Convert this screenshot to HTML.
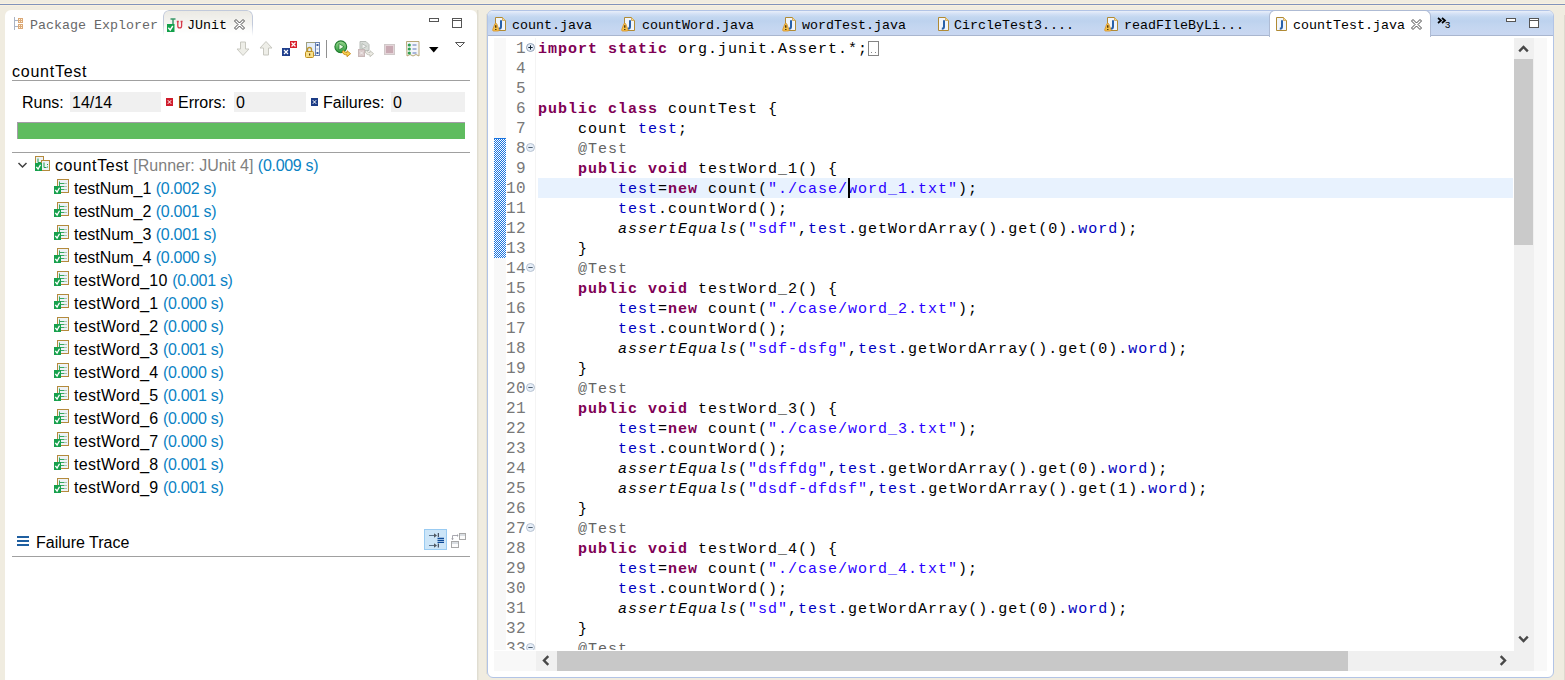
<!DOCTYPE html>
<html><head><meta charset="utf-8"><style>
html,body{margin:0;padding:0}
body{width:1565px;height:680px;background:#f0ece0;position:relative;overflow:hidden;font-family:"Liberation Sans",sans-serif}
.a{position:absolute}
.ui{font-family:"Liberation Sans",sans-serif;font-size:16px;color:#000;white-space:pre;line-height:20px}
.tab{font-family:"Liberation Mono",monospace;font-size:13.33px;white-space:pre;line-height:16px;color:#000}
.code{position:absolute;left:538px;padding-top:2px;font-family:"Liberation Mono",monospace;font-size:15px;letter-spacing:1px;line-height:20px;white-space:pre;color:#000}
.ln{position:absolute;left:501px;padding-top:1px;width:25px;text-align:right;font-family:"Liberation Mono",monospace;font-size:16px;letter-spacing:0.4px;line-height:20px;white-space:pre;color:#787878}
.k{color:#7f0055;font-weight:bold}
.s{color:#2a00ff}
.f{color:#0000c0}
.an{color:#646464}
.i{font-style:italic}
.g{color:#808080}
.b{color:#0a82c4;letter-spacing:-0.3px}
.row{position:absolute;height:23px;line-height:23px}
</style></head><body>
<!-- top stripe -->
<div class="a" style="left:0;top:3px;width:1565px;height:1px;background:#f9f1e0"></div>
<div class="a" style="left:0;top:4px;width:1565px;height:1px;background:#8193bb"></div>
<div class="a" style="left:0;top:5px;width:1565px;height:1px;background:#f9f1e0"></div>

<!-- LEFT PANEL -->
<div class="a" style="left:5px;top:10px;width:472px;height:670px;background:#fff;border-radius:6px 6px 0 0"></div>

<!-- package explorer tab -->
<svg class="a" style="left:13px;top:17px" width="12" height="14" viewBox="0 0 12 14">
 <path d="M1.5 0v13M1.5 3.5h3.5M1.5 9.5h3.5" stroke="#aab4c4" stroke-width="1" fill="none"/>
 <rect x="5" y="1" width="5" height="5" fill="#dba878"/>
 <rect x="5" y="7" width="5" height="5" fill="#dba878"/>
 <path d="M6 2h1v1h-1zM8 2h1v1h-1zM6 4h1v1h-1zM8 4h1v1h-1zM6 8h1v1h-1zM8 8h1v1h-1zM6 10h1v1h-1zM8 10h1v1h-1z" fill="#fff6d8"/>
</svg>
<div class="a tab" style="left:30px;top:18px;color:#686868">Package Explorer</div>
<!-- junit tab -->
<div class="a" style="left:163px;top:10px;width:88px;height:25px;border:1px solid #c2cadb;border-bottom:none;border-radius:6px 6px 0 0;background:linear-gradient(#ebeae4,#ffffff);-webkit-mask-image:linear-gradient(#000 55%,rgba(0,0,0,0))"></div>
<svg class="a" style="left:167px;top:18px" width="18" height="15" viewBox="0 0 18 15">
 <path d="M3.5 1h5M6 1v6.5c0 1.2-0.8 1.8-2 1.8" stroke="#3a9868" stroke-width="1.5" fill="none"/>
 <rect x="0" y="6" width="7.5" height="8" fill="#12a04a"/>
 <path d="M1.3 9.8l1.9 2.2 2.6-4" stroke="#fff" stroke-width="1.4" fill="none"/>
 <path d="M10.8 3.5v4.5a1.9 1.9 0 0 0 3.8 0v-4.5M9.8 3.5h2M13.6 3.5h2" stroke="#d63a4a" stroke-width="1.3" fill="none"/>
</svg>
<div class="a tab" style="left:187px;top:18px">JUnit</div>
<svg class="a" style="left:234px;top:19px" width="11" height="11" viewBox="0 0 11 11">
 <path d="M0.5 2l1.5-1.5 3.5 3.5 3.5-3.5 1.5 1.5-3.5 3.5 3.5 3.5-1.5 1.5-3.5-3.5-3.5 3.5-1.5-1.5 3.5-3.5z" fill="#fff" stroke="#454545" stroke-width="1"/>
</svg>
<!-- min/max -->
<div class="a" style="left:429px;top:18px;width:8px;height:2px;border:1px solid #555;background:#fff"></div>
<div class="a" style="left:452px;top:18px;width:8px;height:8px;border:1px solid #555;background:#fff;box-shadow:inset 0 -6px 0 #fff,inset 0 -7px 0 #555"></div>

<!-- toolbar -->
<svg class="a" style="left:236px;top:41px" width="14" height="15" viewBox="0 0 14 15">
 <path d="M4.5 1h5v7h3.5l-6 6.5-6-6.5h3.5z" fill="#eeeee8" stroke="#c8c8c0"/>
</svg>
<svg class="a" style="left:259px;top:41px" width="14" height="15" viewBox="0 0 14 15">
 <path d="M4.5 14h5v-7h3.5l-6-6.5-6 6.5h3.5z" fill="#eeeee8" stroke="#c8c8c0"/>
</svg>
<svg class="a" style="left:282px;top:41px" width="16" height="16" viewBox="0 0 16 16">
 <rect x="0" y="7" width="8" height="8" fill="#1f3f8c"/>
 <path d="M2 9l4 4M6 9l-4 4" stroke="#fff" stroke-width="1.2"/>
 <rect x="8" y="0" width="7" height="7" fill="#d8202c"/>
 <path d="M9.5 1.5l4 4M13.5 1.5l-4 4" stroke="#fff" stroke-width="1.2"/>
</svg>
<svg class="a" style="left:305px;top:41px" width="16" height="17" viewBox="0 0 16 17">
 <rect x="1.5" y="1.5" width="13" height="13" fill="#e4eefa" stroke="#a0a080"/>
 <rect x="10.5" y="1.5" width="4" height="13" fill="#f4f8fc" stroke="#6c84b0"/>
 <rect x="11.5" y="3" width="2" height="2" fill="#3a5a9a"/><rect x="11.5" y="7" width="2" height="2" fill="#c8d4e8"/><rect x="11.5" y="11" width="2" height="2" fill="#3a5a9a"/>
 <path d="M2.5 10.5v-2a2 2 0 0 1 4 0v2" stroke="#c09a30" fill="none" stroke-width="1.4"/>
 <rect x="0.5" y="10.5" width="8" height="6" rx="1" fill="#f8e08a" stroke="#c09020"/>
 <rect x="4" y="12.5" width="1.2" height="2" fill="#604010"/>
</svg>
<div class="a" style="left:326px;top:40px;width:1px;height:18px;background:#909090"></div>
<svg class="a" style="left:334px;top:40px" width="18" height="18" viewBox="0 0 18 18">
 <defs><linearGradient id="rg" x1="0" y1="0" x2="0" y2="1"><stop offset="0" stop-color="#9ad890"/><stop offset="1" stop-color="#2c9a3c"/></linearGradient></defs>
 <circle cx="6.8" cy="6.8" r="5.9" fill="url(#rg)" stroke="#1f7a2c" stroke-width="1.1"/>
 <path d="M5 3.6v6.4l5-3.2z" fill="#e8f8e0" stroke="#1f7a2c" stroke-width="0.7"/>
 <path d="M9.5 10.5c1 1.5 2 2 3.5 2v-1.8l3.6 3-3.6 3v-1.8c-2.3 0-4-1-5-3z" fill="#f8d050" stroke="#c88a18" stroke-width="0.9"/>
</svg>
<svg class="a" style="left:357px;top:40px" width="18" height="18" viewBox="0 0 18 18">
 <path d="M3 1.5h6l3 3v6h-9z" fill="#d8dcd8" stroke="#b8bcb8"/>
 <path d="M5 3.6v5.4l4.5-2.7z" fill="#f0f0f0" stroke="#a8b0a8" stroke-width="0.7"/>
 <rect x="1.5" y="9.5" width="6" height="7" fill="#d8c8c8" stroke="#c8b8b8"/>
 <path d="M3 11.5l3 3M6 11.5l-3 3" stroke="#f4f0f0" stroke-width="1"/>
 <path d="M9.5 10.5c1 1.5 2 2 3.5 2v-1.8l3.6 3-3.6 3v-1.8c-2.3 0-4-1-5-3z" fill="#ecebe4" stroke="#c0c0b8" stroke-width="0.9"/>
</svg>
<div class="a" style="left:384px;top:44px;width:9px;height:9px;border:1px solid #d0c9c9;background:#c9aab3;box-shadow:inset 0 0 0 1px #e4d4d8"></div>
<svg class="a" style="left:406px;top:41px" width="14" height="16" viewBox="0 0 14 16">
 <path d="M0.5 0.5h12.5v14.5l-3-1.5-3 1.5-3-1.5-3 1.5z" fill="#f4f6fa" stroke="#b8a878"/>
 <circle cx="3.3" cy="4" r="1.6" fill="#30a050"/><circle cx="3.3" cy="8" r="1.6" fill="#30a050"/><circle cx="3.3" cy="12" r="1.6" fill="#30a050"/>
 <path d="M6.5 4h4M6.5 8h4M6.5 12h4" stroke="#5a74b8" stroke-width="1"/>
</svg>
<svg class="a" style="left:428px;top:46px" width="11" height="7" viewBox="0 0 11 7"><path d="M1 1h9.5l-4.75 5.5z" fill="#000"/></svg>
<svg class="a" style="left:454px;top:41px" width="12" height="8" viewBox="0 0 12 8"><path d="M1.5 1.5h9l-4.5 4.5z" fill="#fff" stroke="#555"/></svg>

<!-- countTest label -->
<div class="a ui" style="left:12px;top:62px;letter-spacing:0.75px">countTest</div>
<div class="a" style="left:12px;top:80px;width:458px;height:1px;background:#a0a0a0"></div>

<!-- runs row -->
<div class="a ui" style="left:22px;top:93px">Runs:</div>
<div class="a" style="left:70px;top:92px;width:91px;height:20px;background:#f0f0f0"></div>
<div class="a ui" style="left:72px;top:93px">14/14</div>
<svg class="a" style="left:166px;top:98px" width="7" height="8" viewBox="0 0 7 8"><rect width="7" height="8" fill="#d01c2c"/><path d="M1.8 2.2l3.4 3.6M5.2 2.2l-3.4 3.6" stroke="#fff" stroke-width="1"/></svg>
<div class="a ui" style="left:178px;top:93px">Errors:</div>
<div class="a" style="left:234px;top:92px;width:72px;height:20px;background:#f0f0f0"></div>
<div class="a ui" style="left:236px;top:93px">0</div>
<svg class="a" style="left:311px;top:98px" width="7" height="8" viewBox="0 0 7 8"><rect width="7" height="8" fill="#1c3c86"/><path d="M1.8 2.2l3.4 3.6M5.2 2.2l-3.4 3.6" stroke="#fff" stroke-width="1"/></svg>
<div class="a ui" style="left:323px;top:93px">Failures:</div>
<div class="a" style="left:391px;top:92px;width:74px;height:20px;background:#f0f0f0"></div>
<div class="a ui" style="left:393px;top:93px">0</div>

<!-- progress bar -->
<div class="a" style="left:17px;top:122px;width:447px;height:16px;background:#5fbc5f;border-top:1px solid #a49ca8;border-left:1px solid #a49ca8"></div>
<div class="a" style="left:12px;top:152px;width:458px;height:1px;background:#a0a0a0"></div>

<svg class="a" style="left:17px;top:161px" width="11" height="8" viewBox="0 0 11 8"><path d="M1.5 2l4 4 4-4" stroke="#404040" stroke-width="1.5" fill="none"/></svg>
<svg class="a" style="left:35px;top:156px" width="16" height="16" viewBox="0 0 16 16">
 <rect x="0.5" y="0.5" width="8" height="10" fill="#eef2f6" stroke="#b48a3c"/>
 <path d="M3 2.5v4h3" stroke="#20a050" fill="none"/>
 <rect x="6.5" y="4.5" width="8" height="10" fill="#eef2f6" stroke="#b48a3c"/>
 <path d="M9 6.5v5h2.5M12.5 8v1M12.5 10.5v1" stroke="#20a050" fill="none"/>
 <rect x="0" y="7" width="7" height="8" fill="#17a04c"/>
 <path d="M1.3 10.8l1.8 2.2 2.4-4.2" stroke="#fff" stroke-width="1.3" fill="none"/>
</svg>
<div class="a ui" style="left:55px;top:156px"><span style="letter-spacing:0.6px">countTest</span> <span class="g">[Runner: JUnit 4]</span> <span class="b">(0.009 s)</span></div>
<svg class="a" style="left:54px;top:179px" width="16" height="16" viewBox="0 0 16 16">
 <rect x="3.5" y="0.5" width="11" height="13" fill="#eef2f6" stroke="#b48a3c"/>
 <path d="M5.5 2.5v8M5.5 4.5h5M5.5 7.5h5M5.5 10.5h5" stroke="#3aa860" stroke-width="1" fill="none"/>
 <path d="M12 4v1M12 7v1M12 10v1" stroke="#6a9a70" stroke-width="1"/>
 <rect x="0" y="7" width="7" height="8" fill="#17a04c"/>
 <path d="M1.3 10.8l1.8 2.2 2.4-4.2" stroke="#fff" stroke-width="1.3" fill="none"/>
</svg>
<div class="a ui" style="left:74px;top:179px">testNum_1 <span class="b">(0.002 s)</span></div>
<svg class="a" style="left:54px;top:202px" width="16" height="16" viewBox="0 0 16 16">
 <rect x="3.5" y="0.5" width="11" height="13" fill="#eef2f6" stroke="#b48a3c"/>
 <path d="M5.5 2.5v8M5.5 4.5h5M5.5 7.5h5M5.5 10.5h5" stroke="#3aa860" stroke-width="1" fill="none"/>
 <path d="M12 4v1M12 7v1M12 10v1" stroke="#6a9a70" stroke-width="1"/>
 <rect x="0" y="7" width="7" height="8" fill="#17a04c"/>
 <path d="M1.3 10.8l1.8 2.2 2.4-4.2" stroke="#fff" stroke-width="1.3" fill="none"/>
</svg>
<div class="a ui" style="left:74px;top:202px">testNum_2 <span class="b">(0.001 s)</span></div>
<svg class="a" style="left:54px;top:225px" width="16" height="16" viewBox="0 0 16 16">
 <rect x="3.5" y="0.5" width="11" height="13" fill="#eef2f6" stroke="#b48a3c"/>
 <path d="M5.5 2.5v8M5.5 4.5h5M5.5 7.5h5M5.5 10.5h5" stroke="#3aa860" stroke-width="1" fill="none"/>
 <path d="M12 4v1M12 7v1M12 10v1" stroke="#6a9a70" stroke-width="1"/>
 <rect x="0" y="7" width="7" height="8" fill="#17a04c"/>
 <path d="M1.3 10.8l1.8 2.2 2.4-4.2" stroke="#fff" stroke-width="1.3" fill="none"/>
</svg>
<div class="a ui" style="left:74px;top:225px">testNum_3 <span class="b">(0.001 s)</span></div>
<svg class="a" style="left:54px;top:248px" width="16" height="16" viewBox="0 0 16 16">
 <rect x="3.5" y="0.5" width="11" height="13" fill="#eef2f6" stroke="#b48a3c"/>
 <path d="M5.5 2.5v8M5.5 4.5h5M5.5 7.5h5M5.5 10.5h5" stroke="#3aa860" stroke-width="1" fill="none"/>
 <path d="M12 4v1M12 7v1M12 10v1" stroke="#6a9a70" stroke-width="1"/>
 <rect x="0" y="7" width="7" height="8" fill="#17a04c"/>
 <path d="M1.3 10.8l1.8 2.2 2.4-4.2" stroke="#fff" stroke-width="1.3" fill="none"/>
</svg>
<div class="a ui" style="left:74px;top:248px">testNum_4 <span class="b">(0.000 s)</span></div>
<svg class="a" style="left:54px;top:271px" width="16" height="16" viewBox="0 0 16 16">
 <rect x="3.5" y="0.5" width="11" height="13" fill="#eef2f6" stroke="#b48a3c"/>
 <path d="M5.5 2.5v8M5.5 4.5h5M5.5 7.5h5M5.5 10.5h5" stroke="#3aa860" stroke-width="1" fill="none"/>
 <path d="M12 4v1M12 7v1M12 10v1" stroke="#6a9a70" stroke-width="1"/>
 <rect x="0" y="7" width="7" height="8" fill="#17a04c"/>
 <path d="M1.3 10.8l1.8 2.2 2.4-4.2" stroke="#fff" stroke-width="1.3" fill="none"/>
</svg>
<div class="a ui" style="left:74px;top:271px"><span style="letter-spacing:0.3px">testWord_10</span> <span class="b">(0.001 s)</span></div>
<svg class="a" style="left:54px;top:294px" width="16" height="16" viewBox="0 0 16 16">
 <rect x="3.5" y="0.5" width="11" height="13" fill="#eef2f6" stroke="#b48a3c"/>
 <path d="M5.5 2.5v8M5.5 4.5h5M5.5 7.5h5M5.5 10.5h5" stroke="#3aa860" stroke-width="1" fill="none"/>
 <path d="M12 4v1M12 7v1M12 10v1" stroke="#6a9a70" stroke-width="1"/>
 <rect x="0" y="7" width="7" height="8" fill="#17a04c"/>
 <path d="M1.3 10.8l1.8 2.2 2.4-4.2" stroke="#fff" stroke-width="1.3" fill="none"/>
</svg>
<div class="a ui" style="left:74px;top:294px"><span style="letter-spacing:0.3px">testWord_1</span> <span class="b">(0.000 s)</span></div>
<svg class="a" style="left:54px;top:317px" width="16" height="16" viewBox="0 0 16 16">
 <rect x="3.5" y="0.5" width="11" height="13" fill="#eef2f6" stroke="#b48a3c"/>
 <path d="M5.5 2.5v8M5.5 4.5h5M5.5 7.5h5M5.5 10.5h5" stroke="#3aa860" stroke-width="1" fill="none"/>
 <path d="M12 4v1M12 7v1M12 10v1" stroke="#6a9a70" stroke-width="1"/>
 <rect x="0" y="7" width="7" height="8" fill="#17a04c"/>
 <path d="M1.3 10.8l1.8 2.2 2.4-4.2" stroke="#fff" stroke-width="1.3" fill="none"/>
</svg>
<div class="a ui" style="left:74px;top:317px"><span style="letter-spacing:0.3px">testWord_2</span> <span class="b">(0.000 s)</span></div>
<svg class="a" style="left:54px;top:340px" width="16" height="16" viewBox="0 0 16 16">
 <rect x="3.5" y="0.5" width="11" height="13" fill="#eef2f6" stroke="#b48a3c"/>
 <path d="M5.5 2.5v8M5.5 4.5h5M5.5 7.5h5M5.5 10.5h5" stroke="#3aa860" stroke-width="1" fill="none"/>
 <path d="M12 4v1M12 7v1M12 10v1" stroke="#6a9a70" stroke-width="1"/>
 <rect x="0" y="7" width="7" height="8" fill="#17a04c"/>
 <path d="M1.3 10.8l1.8 2.2 2.4-4.2" stroke="#fff" stroke-width="1.3" fill="none"/>
</svg>
<div class="a ui" style="left:74px;top:340px"><span style="letter-spacing:0.3px">testWord_3</span> <span class="b">(0.001 s)</span></div>
<svg class="a" style="left:54px;top:363px" width="16" height="16" viewBox="0 0 16 16">
 <rect x="3.5" y="0.5" width="11" height="13" fill="#eef2f6" stroke="#b48a3c"/>
 <path d="M5.5 2.5v8M5.5 4.5h5M5.5 7.5h5M5.5 10.5h5" stroke="#3aa860" stroke-width="1" fill="none"/>
 <path d="M12 4v1M12 7v1M12 10v1" stroke="#6a9a70" stroke-width="1"/>
 <rect x="0" y="7" width="7" height="8" fill="#17a04c"/>
 <path d="M1.3 10.8l1.8 2.2 2.4-4.2" stroke="#fff" stroke-width="1.3" fill="none"/>
</svg>
<div class="a ui" style="left:74px;top:363px"><span style="letter-spacing:0.3px">testWord_4</span> <span class="b">(0.000 s)</span></div>
<svg class="a" style="left:54px;top:386px" width="16" height="16" viewBox="0 0 16 16">
 <rect x="3.5" y="0.5" width="11" height="13" fill="#eef2f6" stroke="#b48a3c"/>
 <path d="M5.5 2.5v8M5.5 4.5h5M5.5 7.5h5M5.5 10.5h5" stroke="#3aa860" stroke-width="1" fill="none"/>
 <path d="M12 4v1M12 7v1M12 10v1" stroke="#6a9a70" stroke-width="1"/>
 <rect x="0" y="7" width="7" height="8" fill="#17a04c"/>
 <path d="M1.3 10.8l1.8 2.2 2.4-4.2" stroke="#fff" stroke-width="1.3" fill="none"/>
</svg>
<div class="a ui" style="left:74px;top:386px"><span style="letter-spacing:0.3px">testWord_5</span> <span class="b">(0.001 s)</span></div>
<svg class="a" style="left:54px;top:409px" width="16" height="16" viewBox="0 0 16 16">
 <rect x="3.5" y="0.5" width="11" height="13" fill="#eef2f6" stroke="#b48a3c"/>
 <path d="M5.5 2.5v8M5.5 4.5h5M5.5 7.5h5M5.5 10.5h5" stroke="#3aa860" stroke-width="1" fill="none"/>
 <path d="M12 4v1M12 7v1M12 10v1" stroke="#6a9a70" stroke-width="1"/>
 <rect x="0" y="7" width="7" height="8" fill="#17a04c"/>
 <path d="M1.3 10.8l1.8 2.2 2.4-4.2" stroke="#fff" stroke-width="1.3" fill="none"/>
</svg>
<div class="a ui" style="left:74px;top:409px"><span style="letter-spacing:0.3px">testWord_6</span> <span class="b">(0.000 s)</span></div>
<svg class="a" style="left:54px;top:432px" width="16" height="16" viewBox="0 0 16 16">
 <rect x="3.5" y="0.5" width="11" height="13" fill="#eef2f6" stroke="#b48a3c"/>
 <path d="M5.5 2.5v8M5.5 4.5h5M5.5 7.5h5M5.5 10.5h5" stroke="#3aa860" stroke-width="1" fill="none"/>
 <path d="M12 4v1M12 7v1M12 10v1" stroke="#6a9a70" stroke-width="1"/>
 <rect x="0" y="7" width="7" height="8" fill="#17a04c"/>
 <path d="M1.3 10.8l1.8 2.2 2.4-4.2" stroke="#fff" stroke-width="1.3" fill="none"/>
</svg>
<div class="a ui" style="left:74px;top:432px"><span style="letter-spacing:0.3px">testWord_7</span> <span class="b">(0.000 s)</span></div>
<svg class="a" style="left:54px;top:455px" width="16" height="16" viewBox="0 0 16 16">
 <rect x="3.5" y="0.5" width="11" height="13" fill="#eef2f6" stroke="#b48a3c"/>
 <path d="M5.5 2.5v8M5.5 4.5h5M5.5 7.5h5M5.5 10.5h5" stroke="#3aa860" stroke-width="1" fill="none"/>
 <path d="M12 4v1M12 7v1M12 10v1" stroke="#6a9a70" stroke-width="1"/>
 <rect x="0" y="7" width="7" height="8" fill="#17a04c"/>
 <path d="M1.3 10.8l1.8 2.2 2.4-4.2" stroke="#fff" stroke-width="1.3" fill="none"/>
</svg>
<div class="a ui" style="left:74px;top:455px"><span style="letter-spacing:0.3px">testWord_8</span> <span class="b">(0.001 s)</span></div>
<svg class="a" style="left:54px;top:478px" width="16" height="16" viewBox="0 0 16 16">
 <rect x="3.5" y="0.5" width="11" height="13" fill="#eef2f6" stroke="#b48a3c"/>
 <path d="M5.5 2.5v8M5.5 4.5h5M5.5 7.5h5M5.5 10.5h5" stroke="#3aa860" stroke-width="1" fill="none"/>
 <path d="M12 4v1M12 7v1M12 10v1" stroke="#6a9a70" stroke-width="1"/>
 <rect x="0" y="7" width="7" height="8" fill="#17a04c"/>
 <path d="M1.3 10.8l1.8 2.2 2.4-4.2" stroke="#fff" stroke-width="1.3" fill="none"/>
</svg>
<div class="a ui" style="left:74px;top:478px"><span style="letter-spacing:0.3px">testWord_9</span> <span class="b">(0.001 s)</span></div>


<!-- failure trace -->
<svg class="a" style="left:17px;top:536px" width="13" height="11" viewBox="0 0 13 11"><path d="M0 1h12M0 5h12M0 9h12" stroke="#1f5fa0" stroke-width="2"/></svg>
<div class="a ui" style="left:36px;top:533px">Failure Trace</div>
<div class="a" style="left:424px;top:529px;width:21px;height:19px;background:#cce5f8;border:1px solid #99cbf2"></div>
<svg class="a" style="left:428px;top:532px" width="17" height="17" viewBox="0 0 17 17">
 <path d="M1 3.5h6M1 13.5h6" stroke="#5a7088" stroke-width="1"/>
 <path d="M6 1.3l3 2.2-3 2.2zM6 11.3l3 2.2-3 2.2z" fill="#505860"/>
 <path d="M10.3 1v4M10.3 11.5v4" stroke="#2a3040" stroke-width="1"/>
 <path d="M9.5 6.4h6.5M9.5 8.4h6.5M9.5 10.4h6.5" stroke="#0e4a98" stroke-width="1.1"/>
</svg>
<svg class="a" style="left:450px;top:532px" width="17" height="17" viewBox="0 0 17 17">
 <rect x="9.5" y="1.5" width="6" height="6" fill="#fcfcfc" stroke="#a8a8a8"/><path d="M10 3h5" stroke="#b8c0c8" stroke-width="1"/>
 <rect x="1.5" y="9.5" width="7" height="6" fill="#fcfcfc" stroke="#a8a8a8"/><path d="M2 11h6" stroke="#b8c0c8" stroke-width="1"/>
 <path d="M2.5 7.5v-4h5" stroke="#a8a8b0" stroke-width="1" fill="none"/>
 <path d="M7 2l1.5 1.5-1.5 1.5zM1 6.5l1.5 1.5 1.5-1.5z" fill="#a0a0a8"/>
</svg>
<div class="a" style="left:12px;top:556px;width:458px;height:1px;background:#a0a0a0"></div>


<!-- EDITOR PANEL -->
<div class="a" style="left:487px;top:10px;width:1065px;height:666px;border:1px solid #b2c4e6;border-radius:6px;background:#fff;overflow:hidden">
  <div class="a" style="left:0;top:0;width:1065px;height:24px;background:linear-gradient(#e9effa 0px,#d2e0f5 3px,#c3d7f0 6px,#bdd2ee 10px,#c4d6f0 16px,#c9d7f1 24px);border-bottom:1px solid #a9b6cf"></div>
</div>
<svg class="a" style="left:492px;top:16px" width="15" height="17" viewBox="0 0 15 17">
 <path d="M3.5 1.5h7l3 3v10h-10z" fill="#f0f5fb" stroke="#b08a34"/>
 <path d="M10.5 1.5v3h3" fill="#f4d890" stroke="#c8a050" stroke-width="0.8"/>
 <path d="M9 4.2v6.3c0 1.6-1 2.2-2.2 2.2" stroke="#2860a8" stroke-width="2" fill="none"/>
 <path d="M3.8 7.2c-0.9 0-1.3 1.2-1.7 2.6l-1.3 3.6c-0.4 1 0 1.6 1 1.6h4c1 0 1.4-0.6 1-1.6l-1.3-3.6c-0.4-1.4-0.8-2.6-1.7-2.6z" fill="#f3c24a" stroke="#d88f28" stroke-width="0.8"/><path d="M3.8 9.3v2.4M3.8 13v0.9" stroke="#301800" stroke-width="1.2"/>
</svg>
<div class="a tab" style="left:512px;top:18px">count.java</div>
<svg class="a" style="left:621px;top:16px" width="15" height="17" viewBox="0 0 15 17">
 <path d="M3.5 1.5h7l3 3v10h-10z" fill="#f0f5fb" stroke="#b08a34"/>
 <path d="M10.5 1.5v3h3" fill="#f4d890" stroke="#c8a050" stroke-width="0.8"/>
 <path d="M9 4.2v6.3c0 1.6-1 2.2-2.2 2.2" stroke="#2860a8" stroke-width="2" fill="none"/>
 <path d="M3.8 7.2c-0.9 0-1.3 1.2-1.7 2.6l-1.3 3.6c-0.4 1 0 1.6 1 1.6h4c1 0 1.4-0.6 1-1.6l-1.3-3.6c-0.4-1.4-0.8-2.6-1.7-2.6z" fill="#f3c24a" stroke="#d88f28" stroke-width="0.8"/><path d="M3.8 9.3v2.4M3.8 13v0.9" stroke="#301800" stroke-width="1.2"/>
</svg>
<div class="a tab" style="left:642px;top:18px">countWord.java</div>
<svg class="a" style="left:782px;top:16px" width="15" height="17" viewBox="0 0 15 17">
 <path d="M3.5 1.5h7l3 3v10h-10z" fill="#f0f5fb" stroke="#b08a34"/>
 <path d="M10.5 1.5v3h3" fill="#f4d890" stroke="#c8a050" stroke-width="0.8"/>
 <path d="M9 4.2v6.3c0 1.6-1 2.2-2.2 2.2" stroke="#2860a8" stroke-width="2" fill="none"/>
 <path d="M3.8 7.2c-0.9 0-1.3 1.2-1.7 2.6l-1.3 3.6c-0.4 1 0 1.6 1 1.6h4c1 0 1.4-0.6 1-1.6l-1.3-3.6c-0.4-1.4-0.8-2.6-1.7-2.6z" fill="#f3c24a" stroke="#d88f28" stroke-width="0.8"/><path d="M3.8 9.3v2.4M3.8 13v0.9" stroke="#301800" stroke-width="1.2"/>
</svg>
<div class="a tab" style="left:802px;top:18px">wordTest.java</div>
<svg class="a" style="left:935px;top:16px" width="15" height="17" viewBox="0 0 15 17">
 <path d="M3.5 1.5h7l3 3v10h-10z" fill="#f0f5fb" stroke="#b08a34"/>
 <path d="M10.5 1.5v3h3" fill="#f4d890" stroke="#c8a050" stroke-width="0.8"/>
 <path d="M9 4.2v6.3c0 1.6-1 2.2-2.2 2.2" stroke="#2860a8" stroke-width="2" fill="none"/>
 
</svg>
<div class="a tab" style="left:954px;top:18px">CircleTest3....</div>
<svg class="a" style="left:1104px;top:16px" width="15" height="17" viewBox="0 0 15 17">
 <path d="M3.5 1.5h7l3 3v10h-10z" fill="#f0f5fb" stroke="#b08a34"/>
 <path d="M10.5 1.5v3h3" fill="#f4d890" stroke="#c8a050" stroke-width="0.8"/>
 <path d="M9 4.2v6.3c0 1.6-1 2.2-2.2 2.2" stroke="#2860a8" stroke-width="2" fill="none"/>
 <path d="M3.8 7.2c-0.9 0-1.3 1.2-1.7 2.6l-1.3 3.6c-0.4 1 0 1.6 1 1.6h4c1 0 1.4-0.6 1-1.6l-1.3-3.6c-0.4-1.4-0.8-2.6-1.7-2.6z" fill="#f3c24a" stroke="#d88f28" stroke-width="0.8"/><path d="M3.8 9.3v2.4M3.8 13v0.9" stroke="#301800" stroke-width="1.2"/>
</svg>
<div class="a tab" style="left:1124px;top:18px">readFIleByLi...</div>
<div class="a" style="left:1269px;top:10px;width:160px;height:26px;background:linear-gradient(#fff,#fff);border:1px solid #aebbd4;border-bottom:none;border-radius:6px 6px 0 0"></div>
<svg class="a" style="left:1273px;top:16px" width="15" height="17" viewBox="0 0 15 17">
 <path d="M3.5 1.5h7l3 3v10h-10z" fill="#f0f5fb" stroke="#b08a34"/>
 <path d="M10.5 1.5v3h3" fill="#f4d890" stroke="#c8a050" stroke-width="0.8"/>
 <path d="M9 4.2v6.3c0 1.6-1 2.2-2.2 2.2" stroke="#2860a8" stroke-width="2" fill="none"/>
 
</svg>
<div class="a tab" style="left:1293px;top:18px">countTest.java</div>
<svg class="a" style="left:1411px;top:19px" width="11" height="11" viewBox="0 0 11 11">
 <path d="M0.5 2l1.5-1.5 3.5 3.5 3.5-3.5 1.5 1.5-3.5 3.5 3.5 3.5-1.5 1.5-3.5-3.5-3.5 3.5-1.5-1.5 3.5-3.5z" fill="#fff" stroke="#454545" stroke-width="1"/>
</svg>
<svg class="a" style="left:1437px;top:17px" width="10" height="7" viewBox="0 0 10 7"><path d="M1 1l3 2.5-3 2.5M5 1l3 2.5-3 2.5" stroke="#000" stroke-width="1.7" fill="none"/></svg>
<div class="a" style="left:1445px;top:20px;font:9.5px/10px 'Liberation Sans';color:#000">3</div>
<div class="a" style="left:1506px;top:18px;width:8px;height:2px;border:1px solid #555;background:#fff"></div>
<div class="a" style="left:1529px;top:18px;width:8px;height:8px;border:1px solid #555;background:#fff;box-shadow:inset 0 -6px 0 #fff,inset 0 -7px 0 #555"></div>
<div class="a" style="left:494px;top:38px;width:12px;height:612px;background:#f8f8f8"></div>
<div class="a" style="left:494px;top:138px;width:12px;height:120px;background-color:#fff;background-image:linear-gradient(45deg,#1a74e0 25%,transparent 25%,transparent 75%,#1a74e0 75%),linear-gradient(45deg,#1a74e0 25%,transparent 25%,transparent 75%,#1a74e0 75%);background-size:2px 2px;background-position:0 0,1px 1px"></div>
<div class="a" style="left:494px;top:138px;width:12px;height:1px;background:#1a74e0"></div>
<div class="a" style="left:535px;top:38px;width:1px;height:612px;background:#f4f4f4"></div>
<div class="a" style="left:538px;top:178px;width:975px;height:20px;background:#e8f2fe"></div>
<div class="a" style="left:488px;top:38px;width:1025px;height:612px;overflow:hidden">
<div class="a" style="left:-488px;top:-38px;width:1565px;height:680px">
<div class="ln" style="top:38px">1</div><div class="code" style="top:38px"><span class="k">import</span> <span class="k">static</span> org.junit.Assert.*;</div>
<div class="ln" style="top:58px">4</div>
<div class="ln" style="top:78px">5</div>
<div class="ln" style="top:98px">6</div><div class="code" style="top:98px"><span class="k">public</span> <span class="k">class</span> countTest {</div>
<div class="ln" style="top:118px">7</div><div class="code" style="top:118px">    count <span class="f">test</span>;</div>
<div class="ln" style="top:138px">8</div><div class="code" style="top:138px">    <span class="an">@Test</span></div><svg class="a" style="left:526px;top:143px" width="10" height="10" viewBox="0 0 10 10"><circle cx="4.5" cy="4.5" r="4" fill="#e6eef8" stroke="#b0bccc" stroke-width="0.9"/><path d="M2.3 4.5h4.4" stroke="#506070" stroke-width="1"/></svg>
<div class="ln" style="top:158px">9</div><div class="code" style="top:158px">    <span class="k">public</span> <span class="k">void</span> testWord_1() {</div>
<div class="ln" style="top:178px">10</div><div class="code" style="top:178px">        <span class="f">test</span>=<span class="k">new</span> count(<span class="s">"./case/word_1.txt"</span>);</div>
<div class="ln" style="top:198px">11</div><div class="code" style="top:198px">        <span class="f">test</span>.countWord();</div>
<div class="ln" style="top:218px">12</div><div class="code" style="top:218px">        <span class="i">assertEquals</span>(<span class="s">"sdf"</span>,<span class="f">test</span>.getWordArray().get(0).<span class="f">word</span>);</div>
<div class="ln" style="top:238px">13</div><div class="code" style="top:238px">    }</div>
<div class="ln" style="top:258px">14</div><div class="code" style="top:258px">    <span class="an">@Test</span></div><svg class="a" style="left:526px;top:263px" width="10" height="10" viewBox="0 0 10 10"><circle cx="4.5" cy="4.5" r="4" fill="#e6eef8" stroke="#b0bccc" stroke-width="0.9"/><path d="M2.3 4.5h4.4" stroke="#506070" stroke-width="1"/></svg>
<div class="ln" style="top:278px">15</div><div class="code" style="top:278px">    <span class="k">public</span> <span class="k">void</span> testWord_2() {</div>
<div class="ln" style="top:298px">16</div><div class="code" style="top:298px">        <span class="f">test</span>=<span class="k">new</span> count(<span class="s">"./case/word_2.txt"</span>);</div>
<div class="ln" style="top:318px">17</div><div class="code" style="top:318px">        <span class="f">test</span>.countWord();</div>
<div class="ln" style="top:338px">18</div><div class="code" style="top:338px">        <span class="i">assertEquals</span>(<span class="s">"sdf-dsfg"</span>,<span class="f">test</span>.getWordArray().get(0).<span class="f">word</span>);</div>
<div class="ln" style="top:358px">19</div><div class="code" style="top:358px">    }</div>
<div class="ln" style="top:378px">20</div><div class="code" style="top:378px">    <span class="an">@Test</span></div><svg class="a" style="left:526px;top:383px" width="10" height="10" viewBox="0 0 10 10"><circle cx="4.5" cy="4.5" r="4" fill="#e6eef8" stroke="#b0bccc" stroke-width="0.9"/><path d="M2.3 4.5h4.4" stroke="#506070" stroke-width="1"/></svg>
<div class="ln" style="top:398px">21</div><div class="code" style="top:398px">    <span class="k">public</span> <span class="k">void</span> testWord_3() {</div>
<div class="ln" style="top:418px">22</div><div class="code" style="top:418px">        <span class="f">test</span>=<span class="k">new</span> count(<span class="s">"./case/word_3.txt"</span>);</div>
<div class="ln" style="top:438px">23</div><div class="code" style="top:438px">        <span class="f">test</span>.countWord();</div>
<div class="ln" style="top:458px">24</div><div class="code" style="top:458px">        <span class="i">assertEquals</span>(<span class="s">"dsffdg"</span>,<span class="f">test</span>.getWordArray().get(0).<span class="f">word</span>);</div>
<div class="ln" style="top:478px">25</div><div class="code" style="top:478px">        <span class="i">assertEquals</span>(<span class="s">"dsdf-dfdsf"</span>,<span class="f">test</span>.getWordArray().get(1).<span class="f">word</span>);</div>
<div class="ln" style="top:498px">26</div><div class="code" style="top:498px">    }</div>
<div class="ln" style="top:518px">27</div><div class="code" style="top:518px">    <span class="an">@Test</span></div><svg class="a" style="left:526px;top:523px" width="10" height="10" viewBox="0 0 10 10"><circle cx="4.5" cy="4.5" r="4" fill="#e6eef8" stroke="#b0bccc" stroke-width="0.9"/><path d="M2.3 4.5h4.4" stroke="#506070" stroke-width="1"/></svg>
<div class="ln" style="top:538px">28</div><div class="code" style="top:538px">    <span class="k">public</span> <span class="k">void</span> testWord_4() {</div>
<div class="ln" style="top:558px">29</div><div class="code" style="top:558px">        <span class="f">test</span>=<span class="k">new</span> count(<span class="s">"./case/word_4.txt"</span>);</div>
<div class="ln" style="top:578px">30</div><div class="code" style="top:578px">        <span class="f">test</span>.countWord();</div>
<div class="ln" style="top:598px">31</div><div class="code" style="top:598px">        <span class="i">assertEquals</span>(<span class="s">"sd"</span>,<span class="f">test</span>.getWordArray().get(0).<span class="f">word</span>);</div>
<div class="ln" style="top:618px">32</div><div class="code" style="top:618px">    }</div>
<div class="ln" style="top:638px">33</div><div class="code" style="top:638px">    <span class="an">@Test</span></div><svg class="a" style="left:526px;top:643px" width="10" height="10" viewBox="0 0 10 10"><circle cx="4.5" cy="4.5" r="4" fill="#e6eef8" stroke="#b0bccc" stroke-width="0.9"/><path d="M2.3 4.5h4.4" stroke="#506070" stroke-width="1"/></svg>
<svg class="a" style="left:526px;top:43px" width="10" height="10" viewBox="0 0 10 10"><circle cx="4.5" cy="4.5" r="4" fill="#e6eef8" stroke="#8898b0" stroke-width="0.9"/><path d="M2.3 4.5h4.4M4.5 2.3v4.4" stroke="#102030" stroke-width="1"/></svg>
<div class="a" style="left:868px;top:41px;width:9px;height:13px;border:1px solid #848484"></div><div class="a" style="left:871px;top:52px;width:1px;height:1px;background:#888"></div><div class="a" style="left:875px;top:52px;width:1px;height:1px;background:#888"></div>
<div class="a" style="left:848px;top:178px;width:2px;height:20px;background:#000"></div>
</div></div>
<div class="a" style="left:1514px;top:38px;width:20px;height:633px;background:#f0f0f0"></div>
<div class="a" style="left:1514px;top:59px;width:19px;height:186px;background:#cacaca"></div>
<svg class="a" style="left:1518px;top:45px" width="11" height="8" viewBox="0 0 11 8"><path d="M1.2 6.3l4.3-4.3 4.3 4.3" stroke="#484848" stroke-width="2.4" fill="none"/></svg>
<svg class="a" style="left:1518px;top:635px" width="11" height="8" viewBox="0 0 11 8"><path d="M1.2 1.7l4.3 4.3 4.3-4.3" stroke="#484848" stroke-width="2.4" fill="none"/></svg>
<div class="a" style="left:1534px;top:38px;width:13px;height:633px;background:#f8f8f8"></div>
<div class="a" style="left:494px;top:651px;width:42px;height:20px;background:#f8f8f8"></div>
<div class="a" style="left:536px;top:651px;width:978px;height:20px;background:#f0f0f0"></div>
<div class="a" style="left:557px;top:651px;width:791px;height:20px;background:#c8c8c8"></div>
<svg class="a" style="left:542px;top:655px" width="8" height="11" viewBox="0 0 8 11"><path d="M6.3 1.2l-4.3 4.3 4.3 4.3" stroke="#484848" stroke-width="2.4" fill="none"/></svg>
<svg class="a" style="left:1499px;top:655px" width="8" height="11" viewBox="0 0 8 11"><path d="M1.7 1.2l4.3 4.3-4.3 4.3" stroke="#484848" stroke-width="2.4" fill="none"/></svg>

<div class="a" style="left:1564px;top:15px;width:1px;height:665px;background:#dedad0"></div>
<div class="a" style="left:477px;top:10px;width:1px;height:670px;background:#e0ddd1"></div><div class="a" style="left:478px;top:10px;width:1px;height:670px;background:#e8e5da"></div><div class="a" style="left:486px;top:14px;width:1px;height:660px;background:#e2dfd4"></div>
</body></html>
